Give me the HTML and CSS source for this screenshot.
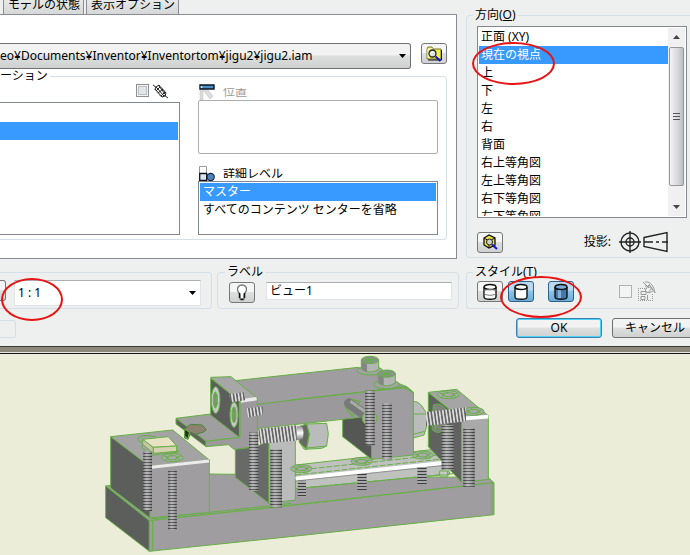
FILE: index.html
```html
<!DOCTYPE html>
<html lang="ja">
<head>
<meta charset="utf-8">
<title>図面ビュー</title>
<link rel="stylesheet" href="styles.css">
</head>
<body>
<main class="dialog">
  <div class="columns">
    <div class="left">
      <div class="tabs" role="tablist">
        <button class="tab" role="tab">モデルの状態</button>
        <button class="tab" role="tab">表示オプション</button>
      </div>
      <section class="panel">
        <div class="file-row">
          <div class="combo combo-file">
            <select aria-label="ファイル"><option>eo¥Documents¥Inventor¥Inventortom¥jigu2¥jigu2.iam</option></select>
            <svg class="arrow" viewBox="0 0 7 4"><path d="M0 0h7L3.500 4z"/></svg>
          </div>
          <button class="tool" aria-label="参照">
            <svg width="16" height="16" viewBox="0 0 16 16"><path d="M1 3l1-2h4l1 2h8v10H1z" fill="#f5ee45" stroke="#77753a"/><path d="M2 12V3h5" fill="none" stroke="#fffde0"/><path d="M15.500 4v10H2" fill="none" stroke="#111"/><circle cx="6.500" cy="7.500" r="3.500" fill="#dce3e4" stroke="#222" stroke-width="1.300"/><path d="M5 8q0-2 2-2" fill="none" stroke="#fff"/><path d="M9.500 10.500l5 4.500" stroke="#1512ce" stroke-width="2"/></svg>
          </button>
        </div>
        <fieldset class="group representation">
          <legend>ーション</legend>
          <div class="rep-left">
            <div class="rep-check">
              <input type="checkbox" id="assoc" class="check" aria-label="関連">
              <svg width="15" height="15" viewBox="0 0 15 15" fill="none" stroke="#222"><path d="M0 1l4 3M11 11l4 3M3 3l3-2 7 8-1 3-3 1-7-8zM4 4l7 8M6 2l6 8M3 7l4-4M5 9l5-4M8 12l4-4"/><path d="M1 5l7 8M7 2l5 5" stroke="#888" stroke-dasharray="1 1"/></svg>
            </div>
            <ul class="listbox" role="listbox" aria-label="ビュー リプレゼンテーション">
              <li role="option"></li>
              <li role="option" class="selected" aria-selected="true"></li>
            </ul>
          </div>
          <div class="rep-right">
            <div class="rep-title disabled">
              <svg width="16" height="16" viewBox="0 0 16 16"><path d="M1 5h3v11H1zM4 6l4-1 6 7-3 3z" fill="#ddd" stroke="#bbb" stroke-width=".5"/><path d="M1 1h14v4H1z" fill="#4c8fc4" stroke="#091623" stroke-width="1.400"/><circle cx="2.500" cy="3" r="1" fill="#d8efff"/></svg>
              <span class="cut-top">位置</span>
            </div>
            <ul class="listbox position" role="listbox" aria-label="位置" aria-disabled="true"></ul>
            <div class="rep-title">
              <svg width="16" height="15" viewBox="0 0 16 15"><path d="M.5 .5h7v7h-7z" fill="#fff" stroke="#999"/><path d="M.7 7.500h7v7h-7z" fill="#dae7f5" stroke="#111" stroke-width="1.300"/><circle cx="11.700" cy="11" r="3.600" fill="#4d84bb" stroke="#172336" stroke-width="1.100"/></svg>
              <span class="cut-bottom">詳細レベル</span>
            </div>
            <ul class="listbox detail" role="listbox" aria-label="詳細レベル">
              <li role="option" class="selected" aria-selected="true">マスター</li>
              <li role="option">すべてのコンテンツ センターを省略</li>
            </ul>
          </div>
        </fieldset>
      </section>
      <div class="bottom-groups">
        <fieldset class="group scale">
          <legend></legend>
          <button class="tool tool-edge" aria-label="尺度の表示"></button>
          <div class="combo combo-scale">
            <select aria-label="尺度"><option>1 : 1</option></select>
            <svg class="arrow" viewBox="0 0 7 4"><path d="M0 0h7L3.500 4z"/></svg>
          </div>
          <span class="mark mark-scale"></span>
        </fieldset>
        <fieldset class="group label-group">
          <legend>ラベル</legend>
          <button class="tool" aria-label="ラベルの表示">
            <svg width="12" height="17" viewBox="0 0 12 17"><path d="M6 1C3 1 1.500 3 1.500 5.500S4 9 4 11.500V15h4v-3.500C8 9 10.500 8 10.500 5.500S9 1 6 1z" fill="#fff" stroke="#777" stroke-width="1.300"/><path d="M3.500 9v5M8.500 9v5M4.500 15.500h3" stroke="#111" stroke-width="1.500"/></svg>
          </button>
          <input class="text" type="text" value="ビュー1" aria-label="ラベル">
        </fieldset>
      </div>
    </div>

    <div class="right">
      <fieldset class="group direction">
        <legend>方向(<u>O</u>)</legend>
        <div class="scroll-list">
          <ul role="listbox" aria-label="方向">
            <li role="option">正面 (XY)</li>
            <li role="option" class="selected" aria-selected="true">現在の視点</li>
            <li role="option">上</li>
            <li role="option">下</li>
            <li role="option">左</li>
            <li role="option">右</li>
            <li role="option">背面</li>
            <li role="option">右上等角図</li>
            <li role="option">左上等角図</li>
            <li role="option">右下等角図</li>
            <li role="option">左下等角図</li>
          </ul>
          <div class="scrollbar">
            <svg class="step" viewBox="0 0 7 4"><path d="M0 4h7L3.500 0z"/></svg>
            <div class="thumb"><i></i><i></i><i></i></div>
            <svg class="step" viewBox="0 0 7 4"><path d="M0 0h7L3.500 4z"/></svg>
          </div>
        </div>
        <div class="projection">
          <button class="tool" aria-label="ビューの方向を変更">
            <svg width="16" height="16" viewBox="0 0 16 16"><path d="M2 4l5-3 6 3v7l-6 3-5-3z" fill="#e9df49" stroke="#111" stroke-width="1.300"/><path d="M2 4l5 3 6-3M7 7v7" fill="none" stroke="#111"/><circle cx="7.500" cy="8" r="3" fill="#ccd3c7" stroke="#222"/><path d="M10 10.500l5 4.500" stroke="#1512ce" stroke-width="2"/></svg>
          </button>
          <span class="projection-label">投影:</span>
          <svg width="50" height="22" viewBox="0 0 50 22" fill="none" stroke="#222" stroke-width="1.400"><circle cx="11" cy="11" r="9"/><circle cx="11" cy="11" r="4"/><path d="M11 0v22M0 11h22M25 6.500l23-5v19l-23-5z"/><path d="M25 11h24" stroke-dasharray="9 3 3 3"/></svg>
        </div>
        <span class="mark mark-view"></span>
      </fieldset>
      <fieldset class="group style-group">
        <legend>スタイル(<u>T</u>)</legend>
        <button class="tool" aria-label="隠線">
          <svg width="16" height="18" viewBox="0 0 16 18" fill="#fff" stroke="#111" stroke-width="1.400"><path d="M2 4v10c0 3 12 3 12 0V4"/><ellipse cx="8" cy="4" rx="6" ry="2.500"/><path d="M2 10c0 3 12 3 12 0M2 8c2-2 10-2 12 0" fill="none" stroke="#777" stroke-width="1"/></svg>
        </button>
        <button class="tool on" aria-label="隠線処理" aria-pressed="true">
          <svg width="16" height="18" viewBox="0 0 16 18" fill="#fff" stroke="#111" stroke-width="1.400"><path d="M2 4v10c0 3 12 3 12 0V4"/><ellipse cx="8" cy="4" rx="6" ry="2.500"/></svg>
        </button>
        <button class="tool on shaded" aria-label="シェーディング" aria-pressed="true">
          <svg width="16" height="18" viewBox="0 0 16 18" fill="#4777a9" stroke="#111" stroke-width="1.400"><path d="M2 4v10c0 3 12 3 12 0V4"/><path d="M5 7v8h3V7z" fill="#86b3dc" stroke="none"/><ellipse cx="8" cy="4" rx="6" ry="2.500" fill="#7dadd8"/></svg>
        </button>
        <input type="checkbox" class="check style-check" disabled aria-label="ラスター">
        <svg width="20" height="21" viewBox="0 0 20 21" fill="none" stroke="#9a9a9a"><path d="M1 7.500h10M1 19.500h15M1.500 7v13M15.500 13v7" stroke-dasharray="1 1"/><path d="M4 10.500h5v3H4zM4 15.500h4v3H4zM10.500 14v5"/><path d="M6 1l6 6M8 1c6-1 9 5 10 11M8 5c4 0 8 3 10 7M8 9l4-5 3 3-4 5zM12 12l4-2M12 3l4 6"/></svg>
        <span class="mark mark-style"></span>
      </fieldset>
    </div>
  </div>
  <div class="footer">
    <div class="status"></div>
    <div class="actions">
      <button class="push default">OK</button>
      <button class="push">キャンセル</button>
    </div>
  </div>
</main>
<div class="frame"></div>

<svg class="model" viewBox="0 12 2070 603" role="img" aria-label="治具アセンブリ">
  <defs>
    <linearGradient id="shade"><stop offset="0" stop-color="#222" stop-opacity=".3"/><stop offset=".4" stop-color="#fff" stop-opacity=".2"/><stop offset="1" stop-color="#222" stop-opacity=".3"/></linearGradient>
    <linearGradient id="bar" x2="0" y2="1"><stop offset="0" stop-color="#888"/><stop offset=".5" stop-color="#fff"/><stop offset="1" stop-color="#777"/></linearGradient>
    <pattern id="tv" width="36" height="9" patternUnits="userSpaceOnUse"><path d="M0 0h36v9H0z" fill="#bdbcbe"/><path d="M0 4.500h36" stroke="#3c3e3d" stroke-width="4"/></pattern>
    <pattern id="th" width="10" height="60" patternUnits="userSpaceOnUse" patternTransform="rotate(-8)"><path d="M0 0h10v60H0z" fill="#dcdcdc"/><path d="M5 0v60" stroke="#444645" stroke-width="4"/></pattern>
    <g id="hole" fill="#aaabaa" stroke="#65b044" stroke-width="3"><ellipse rx="32" ry="12"/><ellipse rx="17" ry="6"/><path d="M-25-4l14 4-10 6M25-4L12 0l12 6M-6-10l4 7M8 3l5 8" fill="none"/></g>
    <g id="bolt" stroke="#65b044" stroke-width="3"><ellipse cy="40" rx="38" ry="13" fill="#a2a3a2"/><path d="M-26 8v28q26 17 52 0V8z" fill="#b3b5b4"/><path d="M-25 10v26q7 6 16 7V12z" fill="#858786" stroke="none"/><ellipse cy="8" rx="26" ry="11" fill="#8f9190"/><path d="M-15 3L0 8l13-6M0 8l8 7M0 8l-15 6" fill="none" stroke-width="5"/></g>
  </defs>
  <g transform="translate(300 0)" stroke="#65b044" stroke-width="3" stroke-linejoin="round">
    <path d="M17 408L330 372 1165 383 1182 398 150 512z" fill="#9f9d9f"/>
    <path d="M17 408L148 512V604L17 503z" fill="#5b5e5a"/>
    <path d="M148 512L570 467 1182 398V494L570 560 148 604z" fill="#9f9d9f"/>
    <path d="M158 511v91M25 406l130 100 420-46M1176 398v96" fill="none"/>
    <path d="M32 260L150 348V504L32 414z" fill="#5b5e5a"/>
    <path d="M32 260L218 240 328 330 150 350z" fill="#a4a3a4"/>
    <path d="M150 350L328 330V487L150 504z" fill="#9f9d9f"/>
    <path d="M153 352L327 333" stroke="#ebecea" stroke-width="9"/>
    <path d="M166 260q-50-10-53 8q4 12 34 10" fill="none"/>
    <path d="M128 268L160 292V310L128 283z" fill="#c7c4a7"/><path d="M128 268L205 260 230 288 160 292z" fill="#e8e2c5"/><path d="M160 292L230 288V304L160 310z" fill="#d6d1b1"/>
    <path d="M126 283v10l30 23 80-10-6-8" fill="none"/>
    <use href="#hole" x="217" y="323"/>
    <path d="M228 205L332 192 420 262 318 274z" fill="#a09fa0"/>
    <path d="M228 205L318 274V290L228 222z" fill="#60625f"/>
    <path d="M254 236v28l10 4 8-21 14 6 25-7 8-7-12-14-35-2-14 10z" fill="#8d8170" stroke="#4b813b"/>
    <path d="M254 238l14 8-4 20-10-8z" fill="#2d2a20"/>
    <path d="M332 85V195L418 262V152z" fill="#5b5e5a"/>
    <path d="M405 92L775 52 920 110 940 128 470 163z" fill="#9f9d9f"/>
    <path d="M470 163L920 110 940 126V315L815 328V245L728 208 470 236z" fill="#9b999b"/>
    <path d="M332 82L393 80 472 145 418 154z" fill="#a8a7a8"/>
    <path d="M318 274L420 262V154L472 145V290L402 298 385 284 318 290z" fill="#9c9a9c"/>
    <path d="M422 153L470 146" stroke="#ebecea" stroke-width="10"/>
    <g fill="#c8cac7"><ellipse cx="347" cy="150" rx="13" ry="40"/><ellipse cx="346" cy="150" rx="6" ry="24" fill="#858b80"/><ellipse cx="402" cy="194" rx="12" ry="38"/><ellipse cx="402" cy="194" rx="6" ry="24" fill="#858b80"/></g>
    <path d="M340 135l14 28M341 163l12-28M395 180l14 28M396 208l12-28"/>
    <path d="M406 298L470 290 507 270V460L406 382z" fill="#686a67"/>
    <path d="M507 278L586 268V450L507 460z" fill="#b9bcba"/>
  </g>
  <g transform="translate(870 0)" stroke="#65b044" stroke-width="3" stroke-linejoin="round">
    <path d="M17 345L415 300 455 297 480 372 17 416z" fill="#bfc1bf"/>
    <path d="M17 361L455 314M17 375L455 327M17 416L500 370" fill="none" stroke-dasharray="18 5"/>
    <path d="M17 386L465 338" stroke="#fff" stroke-width="12"/><path d="M17 393L465 346" stroke="#777" stroke-width="2"/>
    <use href="#hole" x="34" y="356"/><use href="#hole" x="215" y="334"/><use href="#hole" x="398" y="315"/>
    <path d="M158 208L245 198V328L158 260z" fill="#555754"/>
    <path d="M245 122L350 112 370 128V315L245 328z" fill="#9f9d9f"/>
    <path d="M0 150L350 112M260 72L370 128" fill="none"/>
    <use href="#bolt" x="240" y="22"/><use href="#bolt" x="290" y="63"/>
    <path d="M177 160L240 205" stroke="#777978" stroke-width="30" stroke-linecap="round"/><path d="M181 154L239 194" stroke="#a9aaa9" stroke-width="9"/>
    <path d="M185 148l25 6-7 14M164 170l22 28 7-7" fill="none" stroke-width="4"/>
    <circle cx="239" cy="205" r="22" fill="#a5aba2"/>
    <path d="M28 230L50 222 110 220 115 251 110 288 95 295 43 298 28 277z" fill="#b9bcba"/>
    <path d="M28 230L50 222 58 252 50 298 28 277z" fill="#656a62"/><path d="M50 222l8 30-8 42 60-6" fill="none"/>
    <path d="M370 155q14-3 28 16l12 20v38l-8 26-32 9z" fill="#b9bcba"/><path d="M370 192h38M370 253l34-9" fill="none"/>
    <path d="M415 127L515 208V397L415 290z" fill="#60625f"/>
    <path d="M415 127L500 118 595 197 515 208z" fill="#a6a5a6"/>
    <path d="M515 208L595 197V388L515 397z" fill="#aaa9aa"/>
    <path d="M526 205L595 200" stroke="#fff" stroke-width="11"/>
    <use href="#hole" x="475" y="134"/><use href="#hole" x="550" y="184"/>
    <path d="M430 165q25-10 38 16v50q-20 28-42 8z" fill="#7e827c"/><path d="M436 170v72M420 210l35 30" fill="none"/>
    <ellipse cx="461" cy="374" rx="14" ry="7" fill="#ccc"/><path d="M449 363h24v12h-24z" fill="#c7cac5"/>
  </g>
  <g class="threads">
    <g fill="url(#tv)"><path d="M430 303h26v180h-26zM505 362h25v178h-25zM747 248h28v174h-28zM811 298h35v174h-35zM893 392h25v48h-25zM1072 372h28v48h-28zM1252 352h28v50h-28zM1096 122h28v164h-28zM1147 160h28v168h-28zM1325 225h36v135h-36zM1390 235h34v175h-34z"/></g>
    <g fill="url(#shade)"><path d="M430 303h26v180h-26z"/><path d="M505 362h25v178h-25z"/><path d="M747 248h28v174h-28z"/><path d="M811 298h35v174h-35z"/><path d="M1096 122h28v164h-28z"/><path d="M1147 160h28v168h-28z"/><path d="M1325 225h36v135h-36z"/><path d="M1390 235h34v175h-34z"/></g>
    <path d="M885 230l20-3q10 18 2 41l-22 3z" fill="url(#bar)"/>
    <g fill="url(#th)"><path d="M775 237l115-11v46l-110 9zM687 132l45-5 4 24-43 6zM740 175l48-5v24l-44 8zM1278 186l120-14v42l-120 14z"/></g>
  </g>
</svg>
</body>
</html>
```

FILE: styles.css
```css
* { box-sizing: border-box; }

body {
  margin: 0;
  min-height: 100vh;
  overflow: hidden;
  background: #ecedd9;
  color: #000;
  font: 12px/18px "Noto Sans", "Noto Sans CJK JP", sans-serif;
}

button, input, select { font: inherit; color: inherit; margin: 0; }
ul { list-style: none; margin: 0; padding: 0; }
svg { display: block; flex: none; }

.dialog { background: #eef0ef; overflow: hidden; }
.columns { display: grid; grid-template-columns: minmax(0, 1fr) 224px; column-gap: 7px; }
.right { padding-top: 8px; display: flex; flex-direction: column; gap: 7px; }

/* Tabs and main panel */
.tabs { display: flex; gap: 2px; height: 14px; padding-left: 3px; }
.tab {
  height: 14px;
  padding: 0 3px 5px 4px;
  border: 1px solid #898c95;
  border-width: 0 1px;
  background: linear-gradient(#e7e9e8, #d5d8d6);
  line-height: 6px;
  white-space: nowrap;
  overflow: hidden;
}
.panel {
  margin-right: 2px;
  padding: 28px 9px 18px 0;
  border: 1px solid #898c95;
  border-left: 0;
  background: #fefffe;
}
.file-row { display: flex; gap: 10px; height: 26px; }

.combo { position: relative; display: flex; align-items: center; min-width: 0; }
.combo select {
  appearance: none;
  width: 100%;
  height: 100%;
  border: 0;
  border-radius: 0;
  padding: 0;
  background: none;
}
.arrow { position: absolute; right: 4px; width: 7px; height: 4px; }
.combo-file {
  flex: 1;
  border: 1px solid #707070;
  border-left: 0;
  border-radius: 0 3px 3px 0;
  background: linear-gradient(#f2f2f2 0 45%, #dddfde 50%, #cfd1d0);
}
.combo-scale {
  flex: 1;
  height: 26px;
  border: 1px solid #e2e3ea;
  border-top-color: #abadb3;
  background: #fff;
}
.combo-scale select { padding-left: 3px; }

.tool {
  display: flex;
  align-items: center;
  justify-content: center;
  flex: none;
  width: 26px;
  height: 21px;
  padding: 0;
  border: 1px solid #777;
  border-radius: 3px;
  background: linear-gradient(#f5f5f5 0 45%, #dddfde 50%, #d0d2d1);
}
.tool.on { border-color: #2c628b; background: linear-gradient(#b9daee 0 40%, #8cc4e6 50%, #6badd9); }

/* Group boxes */
.group {
  position: relative;
  min-width: 0;
  margin: 0;
  padding: 0 10px;
  border: 1px solid #d5dfe8;
  border-radius: 4px;
}
.group legend { height: 14px; margin-left: -4px; padding: 0 2px; line-height: 14px; }

.representation {
  display: grid;
  grid-template-columns: minmax(0, 180fr) minmax(0, 240fr);
  column-gap: 18px;
  height: 171px;
  padding: 0 8px 0 0;
  border-left: 0;
  border-radius: 0 4px 4px 0;
}
.representation legend { margin-left: 0; padding-left: 0; }
.rep-left, .rep-right { display: flex; flex-direction: column; }
.rep-check { display: flex; gap: 4px; justify-content: flex-end; height: 19px; padding: 1px 12px 0 0; }
.check {
  appearance: none;
  width: 13px;
  height: 13px;
  border: 1px solid #8e8f8f;
  background: #e3e6e9;
  box-shadow: inset 0 0 0 1px #f4f4f4, inset 0 0 0 2px #b9bfc6;
}
.check:disabled { border-color: #b1b1b1; background: #f3f3f3; box-shadow: none; }

.listbox { border: 1px solid #828790; padding: 1px; background: #fff; }
.listbox li { height: 18px; padding-left: 3px; white-space: nowrap; overflow: hidden; }
.selected { background: #3899ff; color: #fff; }
.rep-left .listbox { height: 133px; margin-bottom: 4px; border-left: 0; padding-left: 0; }
.rep-title { display: flex; align-items: flex-end; gap: 8px; height: 17px; padding-left: 1px; }
.disabled { color: #9b9b9b; }
.cut-top { height: 10px; margin-bottom: 2px; line-height: 8px; overflow: hidden; }
.cut-bottom { height: 10px; margin-bottom: 3px; line-height: 12px; overflow: hidden; }
.listbox.position { height: 54px; margin-bottom: 10px; border-color: #adadad; border-radius: 2px; }
.listbox.detail { height: 54px; }

.bottom-groups { display: grid; grid-template-columns: 212fr 242fr; gap: 5px; margin-top: 6px; }
.scale, .label-group, .style-group { display: flex; height: 44px; }
.scale { gap: 8px; padding: 1px 10px 0 0; border-left: 0; border-radius: 0 4px 4px 0; }
.scale .tool-edge { width: 6px; border-left: 0; border-radius: 0 3px 3px 0; }
.label-group { gap: 11px; padding: 3px 6px 0 11px; }
.text {
  flex: 1;
  min-width: 0;
  height: 18px;
  padding: 0 3px;
  border: 1px solid #e2e3ea;
  border-top-color: #abadb3;
  background: #fff;
}

/* View direction */
.right .group { border-right: 0; border-radius: 4px 0 0 4px; }
.direction { height: 250px; padding: 4px 3px 0 10px; }
.scroll-list {
  display: flex;
  height: 192px;
  padding: 1px;
  border: 1px solid #828790;
  background: #fff;
}
.scroll-list ul { flex: 1; height: 188px; overflow: hidden; }
.scroll-list li { height: 18px; padding-left: 2px; }
.scrollbar {
  display: flex;
  flex-direction: column;
  align-items: center;
  justify-content: space-between;
  width: 17px;
  padding: 7px 1px;
  background: #f0f0f0;
}
.step { width: 7px; height: 4px; fill: #444; }
.thumb {
  display: flex;
  flex-direction: column;
  align-items: center;
  justify-content: center;
  gap: 2px;
  width: 100%;
  height: 139px;
  margin-bottom: 12px;
  border: 1px solid #979797;
  border-radius: 2px;
  background: linear-gradient(90deg, #f4f4f5, #dcdce0 50%, #bcbcc4);
}
.thumb i { width: 7px; height: 1px; background: #555; }
.projection { display: flex; align-items: center; margin-top: 13px; padding-right: 18px; }
.projection-label { margin-left: auto; margin-right: 8px; }

.style-group { padding: 2px 0 0 10px; gap: 5px; }
.style-group .shaded { margin-left: 9px; }
.style-check { margin: 4px 0 0 40px; }

/* Hand-drawn highlight rings */
.mark { position: absolute; border: 2px solid #e81313; border-radius: 50%; pointer-events: none; }
.mark-scale { left: 1px; top: -1px; width: 62px; height: 43px; }
.mark-view { left: 5px; top: 20px; width: 83px; height: 43px; }
.mark-style { left: 33px; top: -3px; width: 82px; height: 42px; }

/* Footer */
.footer { display: flex; justify-content: space-between; height: 37px; padding-top: 9px; }
.status { width: 16px; height: 18px; margin-top: 2px; border: 1px solid #d5dfe8; border-left: 0; border-radius: 0 3px 3px 0; }
.actions { display: flex; gap: 10px; margin-right: -8px; }
.push {
  width: 86px;
  height: 20px;
  padding: 0;
  border: 1px solid #707070;
  border-radius: 3px;
  background: linear-gradient(#f3f3f3 0 45%, #dedfdf 50%, #cfd1d0);
  line-height: 16px;
}
.push.default { border-color: #3c7fb1; box-shadow: inset 0 0 0 1px #48d3f7; }

.frame { height: 8px; border-top: 1px solid #3d3c37; border-bottom: 1px solid #151515; background: linear-gradient(#8e887c 0 5px, #e8e8e0 5px); }
.model { width: 100%; height: auto; }
```
